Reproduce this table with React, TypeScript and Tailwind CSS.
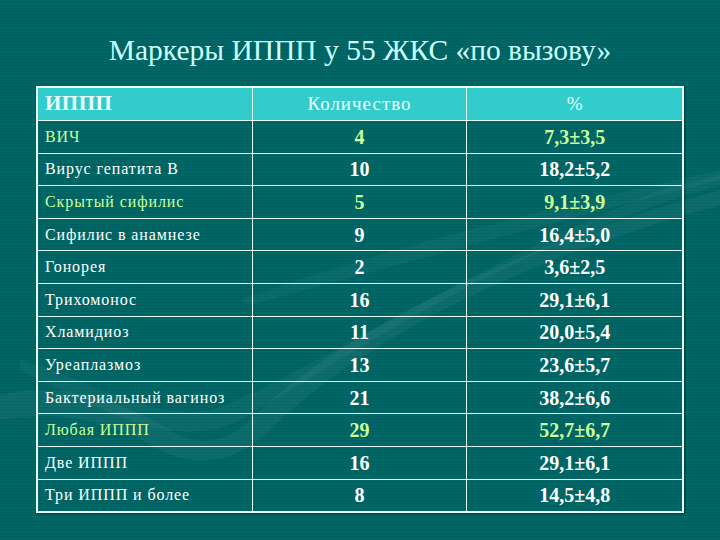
import React from 'react';

type Row = { name: string; count: string; pct: string; hi?: boolean };

const rows: Row[] = [
  { name: 'ВИЧ', count: '4', pct: '7,3±3,5', hi: true },
  { name: 'Вирус гепатита В', count: '10', pct: '18,2±5,2' },
  { name: 'Скрытый сифилис', count: '5', pct: '9,1±3,9', hi: true },
  { name: 'Сифилис в анамнезе', count: '9', pct: '16,4±5,0' },
  { name: 'Гонорея', count: '2', pct: '3,6±2,5' },
  { name: 'Трихомонос', count: '16', pct: '29,1±6,1' },
  { name: 'Хламидиоз', count: '11', pct: '20,0±5,4' },
  { name: 'Уреаплазмоз', count: '13', pct: '23,6±5,7' },
  { name: 'Бактериальный вагиноз', count: '21', pct: '38,2±6,6' },
  { name: 'Любая ИППП', count: '29', pct: '52,7±6,7', hi: true },
  { name: 'Две ИППП', count: '16', pct: '29,1±6,1' },
  { name: 'Три ИППП и более', count: '8', pct: '14,5±4,8' },
];

const Swoosh = () => (
  <svg
    className="absolute inset-0 pointer-events-none"
    width="720"
    height="540"
    viewBox="0 0 720 540"
  >
    <path
      d="M0 395 C 60 380, 120 400, 170 430 C 200 450, 230 440, 250 420 C 330 340, 500 250, 720 190 L 720 205 C 520 260, 360 340, 270 430 C 240 460, 200 470, 160 450 C 110 420, 60 410, 0 420 Z"
      fill="#ffffff"
      fillOpacity="0.05"
    />
    <path
      d="M20 360 C 90 380, 150 420, 210 410 C 300 380, 420 290, 660 190 L 720 175 L 720 185 C 500 250, 360 350, 240 420 C 180 450, 120 420, 20 370 Z"
      fill="#ffffff"
      fillOpacity="0.045"
    />
    <path
      d="M240 300 C 380 250, 520 215, 720 170 L 720 180 C 540 225, 400 265, 250 305 Z"
      fill="#ffffff"
      fillOpacity="0.04"
    />
  </svg>
);

export default function App() {
  return (
    <div className="relative w-[720px] h-[540px] overflow-hidden bg-[#006464] bg-[repeating-linear-gradient(180deg,#006666_0px,#006666_2px,#005f5f_2px,#005f5f_3px)] [font-family:Liberation_Serif,serif]">
      <Swoosh />
      <div className="relative flex flex-col items-center pt-[32px]">
        <h1 className="text-[29.5px] leading-[36px] text-[#ccffff]">
          Маркеры ИППП у 55 ЖКС «по вызову»
        </h1>
        <div className="mt-[18px] w-[648px] border-2 border-[#e8ffff] shadow-[1px_1px_2px_rgba(0,0,0,0.4)]">
          <div className="grid grid-cols-3 h-[32px] bg-[#33cccc] text-[#eaffff]">
            <div className="flex items-center pl-[7px] text-[21px] font-bold tracking-[0.5px] border-r border-[#e8ffff]">
              ИППП
            </div>
            <div className="flex items-center justify-center text-[19px] tracking-[1px] border-r border-[#e8ffff]">
              Количество
            </div>
            <div className="flex items-center justify-center text-[19px]">%</div>
          </div>
          {rows.map((r) => (
            <div
              key={r.name}
              className={`grid grid-cols-3 h-[32.6px] border-t border-[#e8ffff] ${
                r.hi ? 'text-[#ccff99]' : 'text-white'
              }`}
            >
              <div className="flex items-center pl-[7px] text-[16px] tracking-[0.9px] border-r border-[#e8ffff]">
                {r.name}
              </div>
              <div className="flex items-center justify-center text-[20px] font-bold border-r border-[#e8ffff]">
                {r.count}
              </div>
              <div className="flex items-center justify-center text-[20px] font-bold">
                {r.pct}
              </div>
            </div>
          ))}
        </div>
      </div>
    </div>
  );
}
